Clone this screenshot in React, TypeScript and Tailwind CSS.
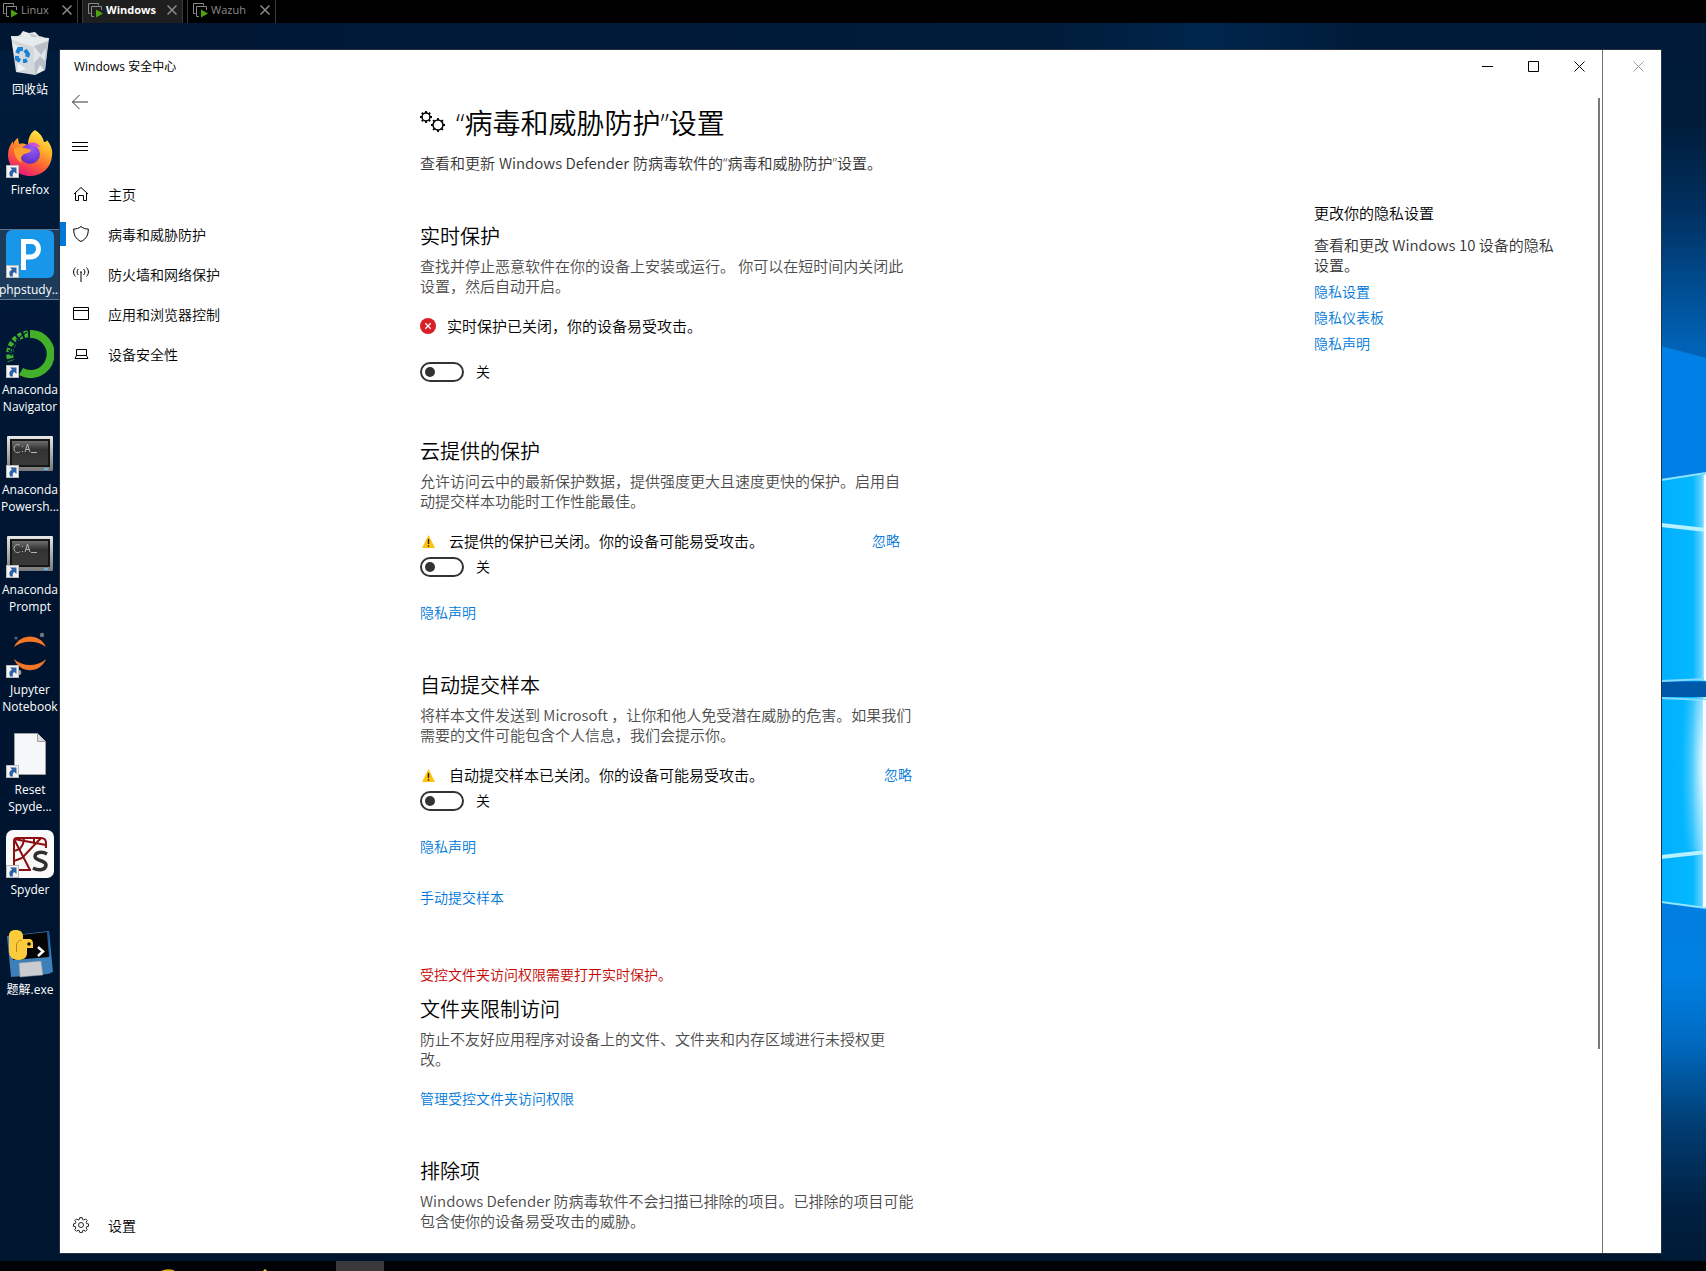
import React from "react";
import clsx from "clsx";

const tabs = [
  { name: "Linux", active: false, box: "w-[78px] pl-[3px] border-r" },
  { name: "Windows", active: true, box: "w-[101px] pl-[5px] ml-1 border-x" },
  { name: "Wazuh", active: false, box: "w-[89px] pl-[5px] ml-1 border-x" },
];

function VmIcon() {
  return (
    <svg width="15" height="15" viewBox="0 0 15 15" fill="none" className="shrink-0">
      <path d="M2.5 10.5h-2v-10h10v2" stroke="#8a8a8a" />
      <path d="M6 13.500H3.500v-10h10V7" stroke="#8a8a8a" />
      <path d="M8 6.500v8l7-4z" fill="#4aa30f" />
    </svg>
  );
}

function TabBar() {
  return (
    <header className="flex h-[23px] shrink-0 bg-black text-[11px]">
      {tabs.map((tab) => (
        <div
          key={tab.name}
          className={clsx(
            "flex items-center border-[#3a3a3a] pr-[5px] pb-[3px]",
            tab.box,
            tab.active ? "bg-[#1f1f1f] font-bold text-white" : "font-normal text-[#8c8c8c]"
          )}
        >
          <VmIcon />
          <span className="ml-[3px] flex-1 leading-4">{tab.name}</span>
          <button type="button" aria-label={`Close ${tab.name}`}>
            <svg width="10" height="10" viewBox="0 0 10 10" stroke="#8a8a8a" strokeWidth="1.500">
              <path d="M.5.5l9 9M9.500.5l-9 9" />
            </svg>
          </button>
        </div>
      ))}
    </header>
  );
}

/* ---------- desktop icons ---------- */

// small arrow badge in the lower left corner of a shortcut
function ShortcutBadge() {
  return (
    <g>
      <rect x="0.500" y="35.500" width="12" height="12" fill="#f4f4f4" stroke="#b9b9b9" />
      <path d="M4 37.500h6.500V44L8.300 42c-1.500 1-1.900 2.400-1.300 4.500H4.200C2.600 43 3.500 41.200 6 39.500z" fill="#2f5fa5" />
    </g>
  );
}

function RecycleBinIcon() {
  return (
    <svg width="48" height="48" viewBox="0 0 48 48">
      <path d="M7 8l7-3 3-4 6 2 6-1 4 4 4 1 4 3-6 5H12z" fill="#e9ebee" />
      <path d="M14 5l5 4-4 4zM23 3l4 6 5-3zM33 6l-3 6 8-2z" fill="#c3c8cd" />
      <path d="M5 6l38 2-4 32-10 5-19-3z" fill="#d3d8dd" />
      <path d="M5 6l38 2-1 4L28 17 6 10z" fill="#eef0f2" opacity=".8" />
      <path d="M28 16l14-5-3 29-10 5z" fill="#b9c0c7" />
      <path d="M6 12l9 6-7 6zM28 16l7 9-7 8zM40 18l-6 8 5 5z" fill="#f3f5f6" opacity=".7" />
      <path d="M12 33l8 6-9 3zM30 44l4-9 4 5z" fill="#fafafa" opacity=".8" />
      <g fill="none" stroke="#1583d8" strokeWidth="4">
        <path d="M11 23l2-4h4" />
        <path d="M19 20l3 4-1 3" />
        <path d="M21 30l-2 1h-2" />
        <path d="M11 26v3l3 2" />
      </g>
    </svg>
  );
}

function FirefoxIcon() {
  return (
    <svg width="48" height="48" viewBox="0 0 48 48">
      <defs>
        <linearGradient id="ffOuter" x1="0.800" y1="0" x2="0.300" y2="1">
          <stop offset="0" stopColor="#fff14a" />
          <stop offset=".35" stopColor="#ffb22c" />
          <stop offset=".65" stopColor="#ff6133" />
          <stop offset="1" stopColor="#e8127c" />
        </linearGradient>
        <radialGradient id="ffGlobe" cx=".6" cy=".25" r=".8">
          <stop offset="0" stopColor="#9a5cf5" />
          <stop offset="1" stopColor="#5a2bc4" />
        </radialGradient>
      </defs>
      <path
        d="M29 0c5 3 8 7 9 12 2 0 3-1 3-2 4 5 6 10 5 16-1 12-10 20-22 20S2 37 2 25c0-6 2-10 5-14v4c1-4 3-6 5-7l1 6c4-1 6 0 9 1 0-6 2-12 7-15z"
        fill="url(#ffOuter)"
      />
      <circle cx="24" cy="24" r="10" fill="url(#ffGlobe)" />
      <path d="M8 19c5-3 11-1 17 1-1 3-4 3-7 4-3 2-4 5-2 9-5-2-8-8-8-14z" fill="#ffa02c" />
      <path d="M22 14c5-3 10-1 13 4-3-2-5-2-7-1-2-2-4-2-6-3z" fill="#d14fe0" />
      <ShortcutBadge />
    </svg>
  );
}

function PhpStudyIcon() {
  return (
    <svg width="48" height="48" viewBox="0 0 48 48">
      <rect width="48" height="48" rx="6" fill="#1796ea" />
      <path d="M17.500 40V11.500H25c5 0 7.500 3.500 7.500 7.500s-3 8-8 8h-7" fill="none" stroke="#fff" strokeWidth="5" />
      <ShortcutBadge />
    </svg>
  );
}

function AnacondaIcon() {
  return (
    <svg width="48" height="48" viewBox="0 0 48 48" fill="none">
      <path d="M24 4a20 20 0 1 1-9 37.500" stroke="#43b02a" strokeWidth="8" />
      <path d="M22 4a20 20 0 0 0-17 27" stroke="#43b02a" strokeWidth="7" strokeDasharray="4 2" />
      <path d="M21 2C12 7 7 14 5 26M22 8C13 9 7 14 2 24M10 9l3 5M2 20l7 4" stroke="#021c3c" strokeWidth="1.200" />
      <ShortcutBadge />
    </svg>
  );
}

function ConsoleIcon() {
  return (
    <svg width="48" height="48" viewBox="0 0 48 48">
      <defs>
        <linearGradient id="conFrame" x1="0" y1="0" x2="0" y2="1">
          <stop offset="0" stopColor="#e8e8e8" />
          <stop offset="1" stopColor="#777" />
        </linearGradient>
        <linearGradient id="conScreen" x1="0" y1="0" x2="0" y2="1">
          <stop offset="0" stopColor="#6e6e6e" />
          <stop offset=".35" stopColor="#333" />
          <stop offset="1" stopColor="#3a3a3a" />
        </linearGradient>
      </defs>
      <rect x="1" y="6" width="46" height="35" rx="1" fill="url(#conFrame)" />
      <rect x="4" y="9" width="40" height="28" fill="#161616" />
      <rect x="6" y="11" width="36" height="24" fill="url(#conScreen)" />
      <path d="M38 39h4" stroke="#6fb4dd" strokeWidth="2" />
      <g fill="none" stroke="#b5b5b5" strokeWidth="1">
        <path d="M14 15.500c-1-1.500-6-1.500-6 3s5 5 6 3M19 22l2.500-8 2.500 8M20 19.500h3M25 22.500h6" />
        <path d="M16.500 16v1M16.500 21v1" />
      </g>
      <ShortcutBadge />
    </svg>
  );
}

function JupyterIcon() {
  return (
    <svg width="48" height="48" viewBox="0 0 48 48">
      <path d="M8 17C14 3 34 3 40 17 31 10 17 10 8 17z" fill="#f37726" />
      <path d="M8 29c6 15 26 15 32 0-9 8-23 8-32 0z" fill="#f37726" />
      <circle cx="36" cy="5" r="2.200" fill="#767677" />
      <circle cx="10" cy="8" r="1.600" fill="#616262" />
      <circle cx="12.500" cy="42.500" r="2.800" fill="#9e9e9e" />
      <ShortcutBadge />
    </svg>
  );
}

function FileIcon() {
  return (
    <svg width="48" height="48" viewBox="0 0 48 48">
      <path d="M8.500 3.500h23l8 8v33h-31z" fill="#f6f7f8" stroke="#9d9d9d" />
      <path d="M31.500 3.500v8h8" fill="#dcdcdc" stroke="#9d9d9d" />
      <ShortcutBadge />
    </svg>
  );
}

function SpyderIcon() {
  return (
    <svg width="48" height="48" viewBox="0 0 48 48" fill="none">
      <rect width="48" height="48" rx="7" fill="#fafafa" />
      <g stroke="#8c0f12" strokeWidth="2">
        <path d="M8 38V11q0-3 3-3h24q5 0 5 5v5M8 9l32 6M8 9l16 31M12 40h13M35 8L16 28M18 9l-1 5-3 5-6 2M28 9v5M8 31l8-3" />
      </g>
      <path d="M41 24c-5-3-12-2-12 2.500s11 3.500 11 8.500-7 6-13 3" stroke="#2f2f31" strokeWidth="3.500" />
      <ShortcutBadge />
    </svg>
  );
}

function PythonExeIcon() {
  return (
    <svg width="48" height="48" viewBox="0 0 48 48">
      <path d="M1 6l42-5 4 41-5 2-37 3z" fill="#3d7fb8" />
      <path d="M40 2l3-1 1 25-3 1z" fill="#1d5f9e" />
      <path d="M5 6l36-4 2 25-36 3z" fill="#050505" />
      <path d="M13 33l22-2 2 14-23 2z" fill="#c9ccd0" stroke="#8b9096" strokeWidth=".5" />
      <path d="M3 6c0-5 3-6 7-6s7 2 7 6v3h6c3 0 4 2 4 5v4h-6v5c0 5-4 7-9 7-6 0-9-4-9-9z" fill="#fbcb3c" />
      <path d="M10.500 22v-7q0-4 5-5" fill="none" stroke="#b98a18" />
      <circle cx="23" cy="14" r="1.800" fill="#111" />
      <path d="M32 17l5 4.500-5 4.500" fill="none" stroke="#fff" strokeWidth="2.500" />
    </svg>
  );
}

const desktopIcons = [
  { label: "回收站", Icon: RecycleBinIcon },
  { label: "Firefox", Icon: FirefoxIcon },
  { label: "phpstudy...", Icon: PhpStudyIcon, selected: true },
  { label: "Anaconda Navigator", Icon: AnacondaIcon },
  { label: "Anaconda Powersh...", Icon: ConsoleIcon },
  { label: "Anaconda Prompt", Icon: ConsoleIcon },
  { label: "Jupyter Notebook", Icon: JupyterIcon },
  { label: "Reset Spyde...", Icon: FileIcon },
  { label: "Spyder", Icon: SpyderIcon },
  { label: "题解.exe", Icon: PythonExeIcon },
];

function DesktopIcons() {
  return (
    <ul className="flex w-[60px] shrink-0 flex-col pt-[6px]">
      {desktopIcons.map(({ label, Icon, selected }) => (
        <li key={label} className="h-[100px]">
          <button
            type="button"
            className={clsx(
              "flex w-full flex-col items-center border-y text-[12px] leading-[17px] font-normal text-white",
              selected ? "h-[71px] border-[#5c7690] bg-[#1d3c5c]" : "border-transparent"
            )}
          >
            <Icon />
            <span className="mt-[3px] w-16 text-center">{label}</span>
          </button>
        </li>
      ))}
    </ul>
  );
}

// light coming through the window pane, seen at the right edge of the desktop
function Wallpaper() {
  return (
    <svg
      className="absolute top-0 right-0 h-full w-[45px]"
      viewBox="0 23 45 1238"
      preserveAspectRatio="none"
      aria-hidden="true"
    >
      <defs>
        <linearGradient id="sky" x1="0" y1="0" x2="0" y2="1">
          <stop offset="0" stopColor="#001a38" />
          <stop offset=".08" stopColor="#001c3a" />
          <stop offset=".15" stopColor="#00305f" />
          <stop offset=".26" stopColor="#0062b4" />
          <stop offset=".5" stopColor="#0078dc" />
          <stop offset=".77" stopColor="#0080e2" />
          <stop offset=".82" stopColor="#006cc4" />
          <stop offset=".89" stopColor="#003d72" />
          <stop offset=".96" stopColor="#001f40" />
          <stop offset="1" stopColor="#001a36" />
        </linearGradient>
        <linearGradient id="pane" x1="0" y1="0" x2="1" y2="0">
          <stop offset="0" stopColor="#00b0ff" />
          <stop offset=".7" stopColor="#04b8ff" />
          <stop offset=".9" stopColor="#5fd0ff" />
          <stop offset="1" stopColor="#d8f6ff" />
        </linearGradient>
        <radialGradient id="glow" cx="1" cy=".45" r="1">
          <stop offset="0" stopColor="#fff" />
          <stop offset="1" stopColor="#6fd6ff" stopOpacity="0" />
        </radialGradient>
      </defs>
      <rect y="23" width="45" height="1238" fill="url(#sky)" />
      <path d="M0 346l45 12v120L0 480z" fill="#0080e6" />
      <path d="M0 480l45-6v207H0zM0 697h45v211L0 902z" fill="url(#pane)" />
      <path d="M0 480l45-7M0 902l45 6" stroke="#8fe4ff" strokeWidth="2" />
      <path d="M0 525l45 5M0 857l45-5" stroke="#b8f1ff" strokeWidth="4" />
      <path d="M0 681l45-2M0 698l45 2" stroke="#7fdcff" strokeWidth="2" />
      <rect y="682" width="45" height="15" fill="#0058a8" />
      <rect x="20" y="700" width="25" height="150" fill="url(#glow)" />
      <path d="M43 475h2v205h-2zM42 700h3v207h-3z" fill="#f4fdff" />
    </svg>
  );
}

/* ---------- window icons ---------- */

function BackIcon() {
  return (
    <svg width="16" height="16" viewBox="0 0 16 16" fill="none" stroke="#333">
      <path d="M.5 8H16M7.500 1l-7 7 7 7" />
    </svg>
  );
}

function MenuIcon() {
  return (
    <svg width="16" height="16" viewBox="0 0 16 16" stroke="#000">
      <path d="M0 4.500h16M0 8.500h16M0 12.500h16" />
    </svg>
  );
}

function HomeIcon() {
  return (
    <svg width="16" height="16" viewBox="0 0 16 16" fill="none" stroke="#000">
      <path d="M1 8l7-6.500L15 8M2.500 7v7.500h3v-5h5v5h3V7" />
    </svg>
  );
}

function ShieldIcon() {
  return (
    <svg width="16" height="16" viewBox="0 0 16 16" fill="none" stroke="#000">
      <path d="M8 .5C5.500 2.500 3.500 3 .7 3c0 6 1.800 9.800 7.300 12.500C13.500 12.800 15.300 9 15.300 3 12.500 3 10.500 2.500 8 .5z" />
    </svg>
  );
}

function AntennaIcon() {
  return (
    <svg width="16" height="16" viewBox="0 0 16 16" fill="none" stroke="#000">
      <path d="M8 6v10M2.500 1.500c-2.600 3-2.600 6 0 9M13.500 1.500c2.600 3 2.600 6 0 9M5.300 3c-1.600 2-1.600 4 0 6M10.700 3c1.600 2 1.600 4 0 6" />
      <circle cx="8" cy="6" r=".8" fill="#000" stroke="none" />
    </svg>
  );
}

function BrowserIcon() {
  return (
    <svg width="16" height="16" viewBox="0 0 16 16" fill="none" stroke="#000">
      <path d="M.5 1.500h15v12H.5zM.5 4.500h15" />
    </svg>
  );
}

function DeviceIcon() {
  return (
    <svg width="16" height="16" viewBox="0 0 16 16" fill="none" stroke="#000">
      <path d="M3.500 9.500v-6h10v6M3.500 9.500h10l1.500 3H2z" />
    </svg>
  );
}

const gearPath =
  "M6.800.6h2.400l.4 1.900 1.300.5 1.600-1.100 1.700 1.700-1.100 1.600.5 1.300 1.900.4v2.400l-1.900.4-.5 1.300 1.100 1.600-1.700 1.700-1.600-1.100-1.300.5-.4 1.900H6.800l-.4-1.900-1.300-.5-1.600 1.100-1.700-1.700 1.100-1.600-.5-1.300-1.900-.4V6.900l1.900-.4.5-1.300-1.100-1.600 1.700-1.700L5.100 3l1.300-.5z";

function GearIcon() {
  return (
    <svg width="16" height="16" viewBox="0 0 16 16" fill="none" stroke="#222">
      <path d={gearPath} />
      <circle cx="8" cy="8" r="2.500" />
    </svg>
  );
}

function GearsIcon() {
  const teeth = [0, 45, 90, 135, 180, 225, 270, 315];
  return (
    <svg width="26" height="26" viewBox="0 0 26 26" fill="none" stroke="#000">
      {[
        { x: 6, y: 7, r: 4 },
        { x: 18, y: 15, r: 5 },
      ].map((g) => (
        <g key={g.x} transform={`translate(${g.x} ${g.y})`}>
          <circle r={g.r} strokeWidth="1.500" />
          {teeth.map((deg) => (
            <path key={deg} d={`M0 ${-g.r}v-2`} transform={`rotate(${deg})`} strokeWidth="1.800" />
          ))}
        </g>
      ))}
    </svg>
  );
}

function ErrorIcon() {
  return (
    <svg width="16" height="16" viewBox="0 0 16 16" className="shrink-0">
      <circle cx="8" cy="8" r="8" fill="#da1f28" />
      <path d="M5.300 5.300l5.400 5.400M10.700 5.300l-5.400 5.400" stroke="#fff" strokeWidth="1.300" />
    </svg>
  );
}

function WarningIcon() {
  return (
    <svg width="16" height="16" viewBox="0 0 16 16" className="shrink-0">
      <path d="M8.500 2L15 15H2z" fill="#ffc20e" />
      <path d="M8.500 6v5M8.500 12.300v1.400" stroke="#222" strokeWidth="1.400" />
    </svg>
  );
}

/* ---------- security window ---------- */

const navItems = [
  { label: "主页", Icon: HomeIcon },
  { label: "病毒和威胁防护", Icon: ShieldIcon, current: true },
  { label: "防火墙和网络保护", Icon: AntennaIcon },
  { label: "应用和浏览器控制", Icon: BrowserIcon },
  { label: "设备安全性", Icon: DeviceIcon },
];

interface NavRowProps {
  label: string;
  Icon: () => React.JSX.Element;
  current?: boolean;
}

function NavRow({ label, Icon, current }: NavRowProps) {
  return (
    <a href="#" className="flex h-10 items-center text-[14px] text-black">
      <span className={clsx("h-6 w-[6px]", current && "bg-[#0078d7]")} />
      <span className="ml-[7px]">
        <Icon />
      </span>
      <span className="ml-[19px]">{label}</span>
    </a>
  );
}

function Sidebar() {
  return (
    <nav className="flex w-[360px] shrink-0 flex-col pb-2">
      <button type="button" aria-label="后退" className="flex h-10 w-12 items-center pl-3">
        <BackIcon />
      </button>
      <button type="button" aria-label="菜单" className="mt-1 mb-2 flex h-10 w-12 items-center pl-3">
        <MenuIcon />
      </button>
      {navItems.map((item) => (
        <NavRow key={item.label} {...item} />
      ))}
      <div className="mt-auto">
        <NavRow label="设置" Icon={GearIcon} />
      </div>
    </nav>
  );
}

function Toggle({ id, label }: { id: string; label: string }) {
  return (
    <div className="flex items-center gap-3 text-[14px] leading-5 text-black">
      <input
        id={id}
        type="checkbox"
        role="switch"
        aria-label={label}
        className="flex h-5 w-11 appearance-none items-center rounded-full border-2 border-[#333] before:ml-[3px] before:size-[10px] before:rounded-full before:bg-[#333] checked:justify-end"
      />
      <label htmlFor={id}>关</label>
    </div>
  );
}

function TextLink({ children, className }: { children: React.ReactNode; className?: string }) {
  return (
    <a href="#" className={clsx("block w-fit text-[14px] leading-5 text-[#0078d7]", className)}>
      {children}
    </a>
  );
}

function Heading({ title, text }: { title: string; text: string }) {
  return (
    <>
      <h2 className="text-[20px] leading-[26px] text-black">{title}</h2>
      <p className="mt-[6px] font-['Noto_Sans_CJK_SC',sans-serif] text-[15px] leading-5 text-[#4c4c4c]">{text}</p>
    </>
  );
}

function Settings() {
  return (
    <div className="w-[492px] shrink-0 pt-[23px]">
      <h1 className="flex items-center gap-[10px] text-[28px] leading-9 text-black">
        <GearsIcon />
        “病毒和威胁防护”设置
      </h1>
      <p className="mt-3 text-[15px] leading-5 text-[#333]">
        查看和更新 <span className="font-['Noto_Sans_CJK_SC',sans-serif]">Windows Defender</span>{" "}
        防病毒软件的“病毒和威胁防护”设置。
      </p>

      <section className="mt-[51px]">
        <Heading
          title="实时保护"
          text="查找并停止恶意软件在你的设备上安装或运行。 你可以在短时间内关闭此设置，然后自动开启。"
        />
        <div className="mt-[18px] mb-6 flex h-6 items-center gap-[11px] text-[15px] text-black">
          <ErrorIcon />
          实时保护已关闭，你的设备易受攻击。
        </div>
        <Toggle id="realtime" label="实时保护" />
      </section>

      <section className="mt-[57px]">
        <Heading
          title="云提供的保护"
          text="允许访问云中的最新保护数据，提供强度更大且速度更快的保护。启用自动提交样本功能时工作性能最佳。"
        />
        <div className="mt-[18px] mb-1 flex h-6 w-[480px] items-center gap-[13px] text-[15px] text-black">
          <WarningIcon />
          <span className="flex-1">云提供的保护已关闭。你的设备可能易受攻击。</span>
          <TextLink>忽略</TextLink>
        </div>
        <Toggle id="cloud" label="云提供的保护" />
        <TextLink className="mt-[26px]">隐私声明</TextLink>
      </section>

      <section className="mt-[50px]">
        <Heading
          title="自动提交样本"
          text="将样本文件发送到 Microsoft ，让你和他人免受潜在威胁的危害。如果我们需要的文件可能包含个人信息，我们会提示你。"
        />
        <div className="mt-[18px] mb-1 flex h-6 items-center gap-[13px] text-[15px] text-black">
          <WarningIcon />
          <span className="flex-1">自动提交样本已关闭。你的设备可能易受攻击。</span>
          <TextLink>忽略</TextLink>
        </div>
        <Toggle id="sample" label="自动提交样本" />
        <TextLink className="mt-[26px]">隐私声明</TextLink>
        <TextLink className="mt-[31px]">手动提交样本</TextLink>
      </section>

      <section className="mt-[57px]">
        <p className="mb-3 text-[14px] leading-5 text-[#c50500]">受控文件夹访问权限需要打开实时保护。</p>
        <Heading
          title="文件夹限制访问"
          text="防止不友好应用程序对设备上的文件、文件夹和内存区域进行未授权更改。"
        />
        <TextLink className="mt-5">管理受控文件夹访问权限</TextLink>
      </section>

      <section className="mt-[50px] w-[500px]">
        <Heading
          title="排除项"
          text="Windows Defender 防病毒软件不会扫描已排除的项目。已排除的项目可能包含使你的设备易受攻击的威胁。"
        />
      </section>
    </div>
  );
}

function PrivacyAside() {
  return (
    <aside className="w-[288px] shrink-0 pt-[121px] pr-10">
      <h3 className="text-[15px] leading-5 text-black">更改你的隐私设置</h3>
      <p className="mt-3 mb-[7px] font-['Noto_Sans_CJK_SC',sans-serif] text-[15px] leading-5 text-[#333]">
        查看和更改 Windows 10 设备的隐私设置。
      </p>
      <div className="flex flex-col gap-[6px]">
        <TextLink>隐私设置</TextLink>
        <TextLink>隐私仪表板</TextLink>
        <TextLink>隐私声明</TextLink>
      </div>
    </aside>
  );
}

function CaptionButton({ label, d, color = "#000" }: { label: string; d: string; color?: string }) {
  return (
    <button type="button" aria-label={label} className="flex h-8 w-[46px] items-center justify-center">
      <svg width="11" height="11" viewBox="0 0 11 11" fill="none" stroke={color}>
        <path d={d} />
      </svg>
    </button>
  );
}

function SecurityWindow() {
  return (
    <div className="relative flex min-w-0 flex-1 flex-col bg-white">
      <div className="flex h-8 shrink-0 items-center">
        <span className="flex-1 pt-[2px] pl-[14px] text-[12px] font-normal text-black">Windows 安全中心</span>
        <CaptionButton label="最小化" d="M0 5.500h11" />
        <CaptionButton label="最大化" d="M.5.5h10v10H.5z" />
        <CaptionButton label="关闭" d="M.5.5l10 10M10.500.5l-10 10" />
      </div>
      <div className="flex min-h-0 flex-1 overflow-hidden">
        <Sidebar />
        <main className="flex flex-1 justify-between">
          <Settings />
          <PrivacyAside />
        </main>
      </div>
      {/* scroll thumb */}
      <div className="absolute top-12 right-[2px] bottom-[204px] w-[2px] bg-[#7a7a7a]" />
    </div>
  );
}

export default function App() {
  return (
    <div
      lang="zh-CN"
      className="flex h-screen flex-col overflow-hidden bg-[#00152e] font-['Open_Sans','Noto_Sans_CJK_SC',sans-serif] font-[350]"
    >
      <TabBar />
      <div className="relative flex min-h-0 flex-1 bg-linear-to-b from-[#001c3c] via-[#00142f] to-[#00162f]">
        <div className="absolute inset-x-0 top-0 h-7 bg-linear-to-r from-[#001733] via-[#001c3b] via-60% to-[#001a38]" />
        <div className="absolute top-0 right-[350px] h-7 w-[300px] bg-linear-to-r from-transparent via-[#00264c] to-transparent" />
        <Wallpaper />
        <div className="relative flex min-w-0 flex-1">
          <DesktopIcons />
          <div className="mt-[27px] mr-[45px] mb-2 flex min-w-0 flex-1 bg-white ring-1 ring-[#26323f]">
            <SecurityWindow />
            <div className="flex w-[59px] shrink-0 justify-end border-l border-[#6f6f6f]">
              <CaptionButton label="关闭" d="M.5.5l10 10M10.500.5l-10 10" color="#999" />
            </div>
          </div>
        </div>
      </div>
      <footer className="flex h-[10px] shrink-0 bg-[#000205]">
        <svg width="336" height="10" viewBox="0 0 336 10" aria-hidden="true">
          <path d="M161 10q5-3 13-1v1z" fill="#d9a916" />
          <path d="M263 10l2-2 2 2z" fill="#f3dc2b" />
        </svg>
        <div className="w-12 bg-[#39393c]" />
      </footer>
    </div>
  );
}
